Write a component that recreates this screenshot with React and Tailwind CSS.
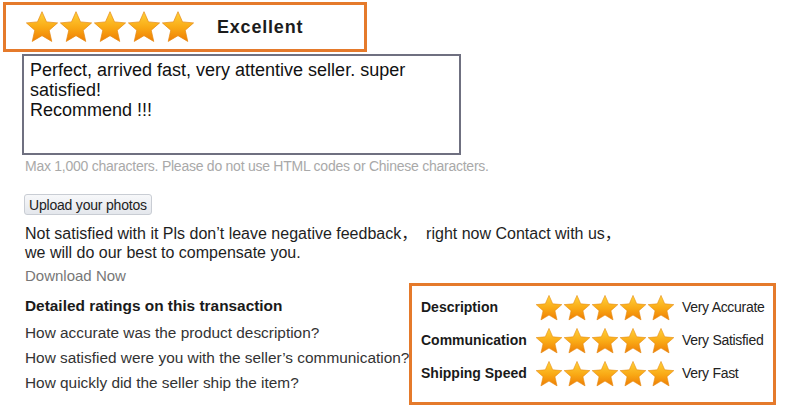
import React from 'react';

const Star = ({ size, id }) => (
    <svg width={size} height={size} viewBox="0 0 24 24">
        <defs>
            <linearGradient id={id} x1="0" y1="0" x2="0" y2="1">
                <stop offset="0%" stopColor="#ffd23a" />
                <stop offset="55%" stopColor="#f9a814" />
                <stop offset="100%" stopColor="#ee7d05" />
            </linearGradient>
        </defs>
        <polygon
            points="12,1.2 15.2,8.4 23,9.1 17.1,14.3 18.9,22.2 12,18.1 5.1,22.2 6.9,14.3 1,9.1 8.8,8.4"
            fill={`url(#${id})`}
            stroke="#e58a12"
            strokeWidth="0.5"
            strokeLinejoin="round"
        />
    </svg>
);

const Stars = ({ size, prefix }) => (
    <div className="flex items-center">
        {[0, 1, 2, 3, 4].map((i) => (
            <Star key={i} size={size} id={`${prefix}-${i}`} />
        ))}
    </div>
);

const ratings = [
    { label: 'Description', value: 'Very Accurate' },
    { label: 'Communication', value: 'Very Satisfied' },
    { label: 'Shipping Speed', value: 'Very Fast' },
];

const questions = [
    'How accurate was the product description?',
    'How satisfied were you with the seller\u2019s communication?',
    'How quickly did the seller ship the item?',
];

export default function App() {
    return (
        <div
            className="relative w-[800px] h-[414px] bg-white overflow-hidden text-[#222]"
            style={{ fontFamily: '"Liberation Sans", Arial, "Noto Sans CJK SC", sans-serif' }}
        >
            {/* overall rating */}
            <div className="ml-[3px] pt-[2px]">
                <div className="w-[364px] h-[50px] border-[3px] border-[#e57a2b] flex items-center pl-[19px]">
                    <Stars size={34} prefix="top" />
                    <span className="ml-[22px] text-[18px] font-bold tracking-[0.8px] text-[#1c1c1c]">Excellent</span>
                </div>
            </div>

            {/* feedback text */}
            <div className="ml-[22px] mt-[2px] w-[439px] h-[101px] border-2 border-[#6f7080] pl-[6px] pt-[4px] text-[18px] leading-[20px] text-[#111]">
                Perfect, arrived fast, very attentive seller. super
                <br />
                satisfied!
                <br />
                Recommend !!!
            </div>

            <div className="pl-[25px]">
                <p className="mt-[2px] text-[14px] leading-[18px] text-[#a9a9a9] tracking-[-0.25px]">
                    Max 1,000 characters. Please do not use HTML codes or Chinese characters.
                </p>

                <button className="mt-[19px] -ml-[1px] h-[21px] px-[4px] rounded-[3px] border border-[#c9cdd4] bg-gradient-to-b from-[#f7f8fa] to-[#e4e7ec] text-[14px] tracking-[-0.2px] leading-[18px] text-[#222]">
                    Upload your photos
                </button>

                <p className="mt-[7px] text-[16px] leading-[19px] text-[#1e1e1e]">
                    Not satisfied with it Pls don’t leave negative feedback，&nbsp; right now Contact with us，
                    <br />
                    we will do our best to compensate you.
                </p>

                <p className="mt-[4px] text-[15px] leading-[19px] text-[#777]">Download Now</p>

                <p className="mt-[12px] text-[15.4px] leading-[18px] font-bold text-[#1a1a1a]">
                    Detailed ratings on this transaction
                </p>

                <div className="mt-[5px] flex flex-col">
                    {questions.map((q) => (
                        <p key={q} className="text-[15.4px] leading-[25px] text-[#333]">{q}</p>
                    ))}
                </div>
            </div>

            {/* detailed rating overlay */}
            <div className="absolute left-[409px] top-[283px] w-[367px] h-[122px] border-[3px] border-[#e57a2b] bg-white pl-[9px] pt-[5px]">
                {ratings.map((r, i) => (
                    <div key={r.label} className="flex items-center h-[33px]">
                        <span className="w-[114px] text-[14px] font-bold text-[#1a1a1a] whitespace-nowrap">{r.label}</span>
                        <Stars size={28} prefix={`row${i}`} />
                        <span className="ml-[7px] text-[14px] tracking-[-0.3px] text-[#222]">{r.value}</span>
                    </div>
                ))}
            </div>
        </div>
    );
}
